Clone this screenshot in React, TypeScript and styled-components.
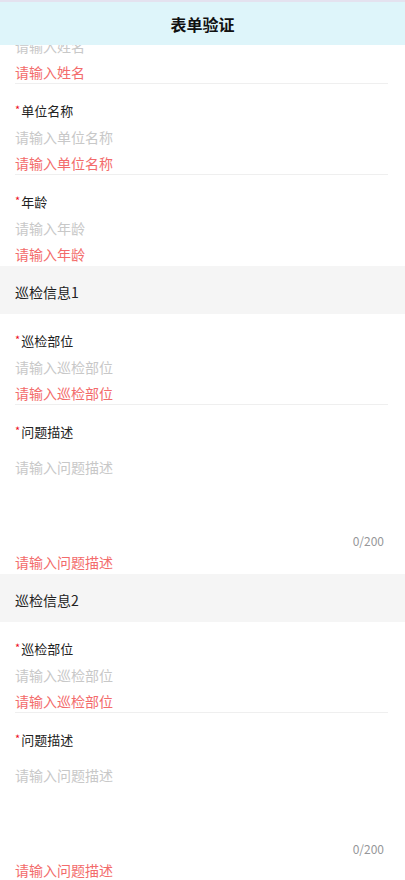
import React, { useLayoutEffect } from "react";
import styled, { createGlobalStyle } from "styled-components";

const GlobalStyle = createGlobalStyle`
  html, body {
    margin: 0;
    padding: 0;
    background: #ffffff;
    font-family: "Noto Sans CJK SC", "Noto Sans", sans-serif;
    color: #323233;
  }
  * { box-sizing: border-box; }
`;

const Page = styled.div`
  width: 100%;
  min-height: 100vh;
  padding-bottom: 40px;
`;

const Header = styled.header`
  position: fixed;
  top: 0;
  left: 0;
  right: 0;
  z-index: 10;
  height: 45px;
  border-top: 2px solid #e4e2ef;
  background: #def5fa;
  display: flex;
  align-items: center;
  justify-content: center;
  font-size: 16px;
  font-weight: 700;
  color: #111;
`;

const Form = styled.div`
  display: flex;
  flex-direction: column;
`;

const Group = styled.div`
  padding: 0 17px 0 15px;
  display: flex;
  flex-direction: column;
`;

const Item = styled.div<{ $last?: boolean }>`
  padding-top: 17px;
  display: flex;
  flex-direction: column;
  border-bottom: 1px solid ${(p) => (p.$last ? "transparent" : "#efefef")};
`;

const Label = styled.div`
  height: 20px;
  line-height: 20px;
  font-size: 13px;
  color: #222;
  display: flex;
  align-items: center;
`;

const Star = styled.span`
  color: #ee0a24;
  font-size: 11px;
  margin-right: 1px;
  align-self: flex-start;
  line-height: 16px;
`;

const Input = styled.div`
  margin-top: 3px;
  height: 26px;
  line-height: 26px;
  font-size: 14px;
  color: #c8c8c8;
`;

const TextArea = styled.div`
  margin-top: 3px;
  height: 88px;
  padding-top: 9px;
  line-height: 26px;
  font-size: 14px;
  color: #c8c8c8;
`;

const Counter = styled.div`
  text-align: right;
  font-size: 12px;
  line-height: 16px;
  color: #969799;
  padding-right: 4px;
`;

const ErrorText = styled.div`
  margin-top: 2px;
  height: 22px;
  line-height: 22px;
  font-size: 14px;
  color: #f36b6b;
`;

const Section = styled.div`
  height: 48px;
  background: #f5f5f5;
  display: flex;
  align-items: center;
  padding-left: 15px;
  padding-top: 3px;
  font-size: 14px;
  color: #222;
`;

type Field = { label: string; name: string; multiline?: boolean };

const FieldItem: React.FC<{ field: Field; last?: boolean }> = ({ field, last }) => (
  <Item $last={last}>
    <Label>
      <Star>*</Star>
      {field.label}
    </Label>
    {field.multiline ? (
      <>
        <TextArea>请输入{field.name}</TextArea>
        <Counter>0/200</Counter>
      </>
    ) : (
      <Input>请输入{field.name}</Input>
    )}
    <ErrorText>请输入{field.name}</ErrorText>
  </Item>
);

const basic: Field[] = [
  { label: "姓名", name: "姓名" },
  { label: "单位名称", name: "单位名称" },
  { label: "年龄", name: "年龄" },
];

const inspection: Field[] = [
  { label: "巡检部位", name: "巡检部位" },
  { label: "问题描述", name: "问题描述", multiline: true },
];

export default function App() {
  useLayoutEffect(() => {
    window.scrollTo(0, 7);
  }, []);

  return (
    <Page>
      <GlobalStyle />
      <Header>表单验证</Header>
      <Form>
        <Group>
          {basic.map((f, i) => (
            <FieldItem key={f.label} field={f} last={i === basic.length - 1} />
          ))}
        </Group>
        {[1, 2].map((n) => (
          <React.Fragment key={n}>
            <Section>巡检信息{n}</Section>
            <Group>
              {inspection.map((f, i) => (
                <FieldItem key={f.label} field={f} last={i === inspection.length - 1} />
              ))}
            </Group>
          </React.Fragment>
        ))}
      </Form>
    </Page>
  );
}
